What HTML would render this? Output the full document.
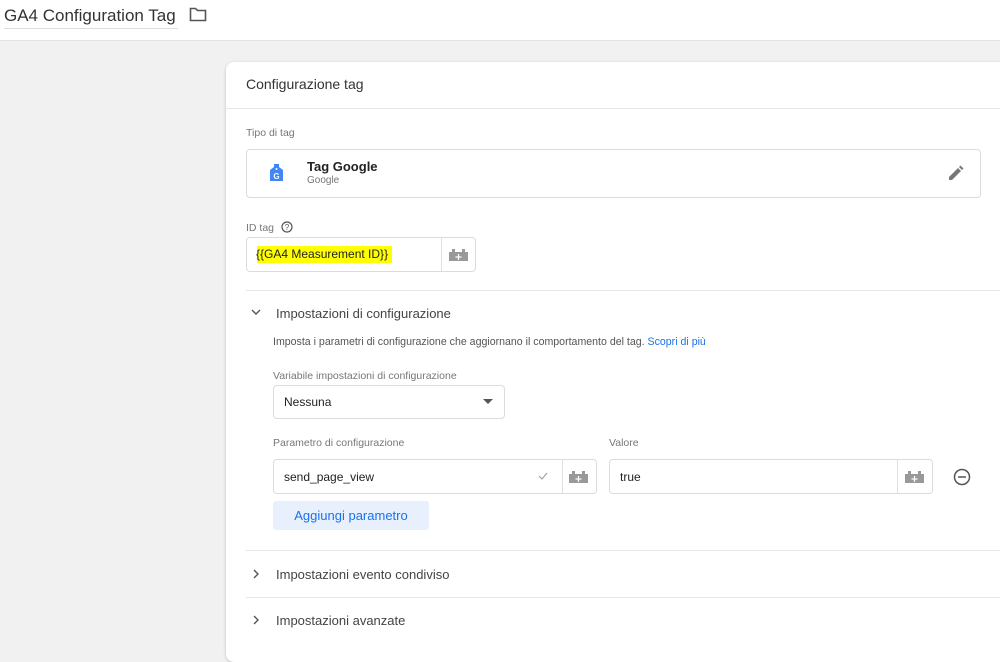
<!DOCTYPE html><html><head><style>
body{margin:0;width:1000px;height:640px;overflow:hidden;background:#f1f1f1;font-family:"Liberation Sans",sans-serif;position:relative}
.a{position:absolute}
.top{left:0;top:0;width:1000px;height:40px;background:#fff;border-bottom:1px solid #e4e4e4}
.card{left:226px;top:62px;width:790px;height:600px;background:#fff;border-radius:8px;box-shadow:0 1px 3px rgba(0,0,0,.2)}
.lbl{font-size:10.5px;color:#777}
.box{border:1px solid #dcdcdc;border-radius:4px;background:#fff}
.t{font-size:13px;color:#222}
.hr{height:1px;background:#e6e6e6}
.sec{font-size:13px;color:#444}
</style></head><body>
<div class="a top"></div>
<div class="a" style="left:4px;top:6px;font-size:17px;color:#333">GA4 Configuration Tag</div>
<div class="a" style="left:4px;top:28px;width:174px;height:1px;background:#ddd"></div>
<svg class="a" style="left:189px;top:7px" width="18" height="15" viewBox="0 0 18 15"><path d="M1.5 1.5h5l2 2h8v10h-15z" fill="none" stroke="#555" stroke-width="1.6"/></svg>
<div class="a card"></div>
<div class="a" style="left:246px;top:76px;font-size:14px;color:#333">Configurazione tag</div>
<div class="a hr" style="left:226px;top:108px;width:774px"></div>
<div class="a lbl" style="left:246px;top:127px">Tipo di tag</div>
<div class="a box" style="left:246px;top:149px;width:733px;height:47px"></div>
<svg class="a" style="left:270px;top:164px" width="13" height="18" viewBox="0 0 13 18"><path d="M4 0h5v3l4 3v11H0V6l4-3z" fill="#4285f4"/><circle cx="6.5" cy="5" r="1" fill="#fff"/><text x="6.5" y="15" font-size="8" font-family="Liberation Sans" fill="#fff" text-anchor="middle" font-weight="bold">G</text></svg>
<div class="a t" style="left:307px;top:159px;font-weight:bold">Tag Google</div>
<div class="a" style="left:307px;top:175px;font-size:10px;color:#777">Google</div>
<svg class="a" style="left:948px;top:165px" width="16" height="16" viewBox="0 0 16 16"><path d="M1 15v-3l9-9 3 3-9 9zM11 2l1.5-1.5 3 3L14 5z" fill="#777"/></svg>
<div class="a lbl" style="left:246px;top:222px">ID tag</div>
<svg class="a" style="left:281px;top:221px" width="12" height="12" viewBox="0 0 12 12"><circle cx="6" cy="6" r="5" fill="none" stroke="#555" stroke-width="1.2"/><text x="6" y="9" font-size="8" text-anchor="middle" fill="#555" font-family="Liberation Sans">?</text></svg>
<div class="a box" style="left:246px;top:237px;width:228px;height:33px"></div>
<div class="a" style="left:441px;top:238px;width:1px;height:33px;background:#e0e0e0"></div>
<div class="a" style="left:257px;top:246px;width:135px;height:17px;background:#ffff00"></div>
<div class="a t" style="left:256px;top:247px;font-size:12px">{{GA4 Measurement ID}}</div>
<svg class="a" style="left:449px;top:249px" width="19" height="12" viewBox="0 0 19 12"><path d="M0 3h3V0h3v3h7V0h3v3h3v9H0z" fill="#999"/><path d="M9.5 5v6M6.5 8h6" stroke="#fff" stroke-width="1.2"/></svg>
<div class="a hr" style="left:246px;top:290px;width:754px"></div>
<svg class="a" style="left:251px;top:308px" width="10" height="8" viewBox="0 0 10 8"><path d="M1 2l4 4 4-4" fill="none" stroke="#555" stroke-width="1.4"/></svg>
<div class="a sec" style="left:276px;top:306px">Impostazioni di configurazione</div>
<div class="a" style="left:273px;top:336px;font-size:10.6px;color:#555">Imposta i parametri di configurazione che aggiornano il comportamento del tag. <span style="color:#1a73e8">Scopri di più</span></div>
<div class="a lbl" style="left:273px;top:370px">Variabile impostazioni di configurazione</div>
<div class="a box" style="left:273px;top:385px;width:230px;height:32px"></div>
<div class="a t" style="left:284px;top:395px;font-size:12px">Nessuna</div>
<svg class="a" style="left:483px;top:399px" width="10" height="5"><path d="M0 0h10L5 5z" fill="#555"/></svg>
<div class="a lbl" style="left:273px;top:437px">Parametro di configurazione</div>
<div class="a lbl" style="left:609px;top:437px">Valore</div>
<div class="a box" style="left:273px;top:459px;width:322px;height:33px"></div>
<div class="a" style="left:562px;top:460px;width:1px;height:33px;background:#e0e0e0"></div>
<div class="a t" style="left:284px;top:470px;font-size:12px">send_page_view</div>
<svg class="a" style="left:538px;top:472px" width="10" height="8"><path d="M1 4l3 3 5-6" fill="none" stroke="#999" stroke-width="1"/></svg>
<svg class="a" style="left:569px;top:471px" width="19" height="12" viewBox="0 0 19 12"><path d="M0 3h3V0h3v3h7V0h3v3h3v9H0z" fill="#999"/><path d="M9.5 5v6M6.5 8h6" stroke="#fff" stroke-width="1.2"/></svg>
<div class="a box" style="left:609px;top:459px;width:322px;height:33px"></div>
<div class="a" style="left:897px;top:460px;width:1px;height:33px;background:#e0e0e0"></div>
<div class="a t" style="left:620px;top:470px;font-size:12px">true</div>
<svg class="a" style="left:905px;top:471px" width="19" height="12" viewBox="0 0 19 12"><path d="M0 3h3V0h3v3h7V0h3v3h3v9H0z" fill="#999"/><path d="M9.5 5v6M6.5 8h6" stroke="#fff" stroke-width="1.2"/></svg>
<svg class="a" style="left:953px;top:468px" width="18" height="18"><circle cx="9" cy="9" r="7.5" fill="none" stroke="#555" stroke-width="1.5"/><path d="M5 9h8" stroke="#555" stroke-width="1.5"/></svg>
<div class="a" style="left:273px;top:501px;width:156px;height:29px;background:#e8f0fe;border-radius:3px;color:#1a73e8;font-size:13px;text-align:center;line-height:29px">Aggiungi parametro</div>
<div class="a hr" style="left:246px;top:550px;width:754px"></div>
<svg class="a" style="left:252px;top:569px" width="8" height="10"><path d="M2 1l4 4-4 4" fill="none" stroke="#555" stroke-width="1.4"/></svg>
<div class="a sec" style="left:276px;top:567px">Impostazioni evento condiviso</div>
<div class="a hr" style="left:246px;top:597px;width:754px"></div>
<svg class="a" style="left:252px;top:615px" width="8" height="10"><path d="M2 1l4 4-4 4" fill="none" stroke="#555" stroke-width="1.4"/></svg>
<div class="a sec" style="left:276px;top:613px">Impostazioni avanzate</div>
</body></html>
